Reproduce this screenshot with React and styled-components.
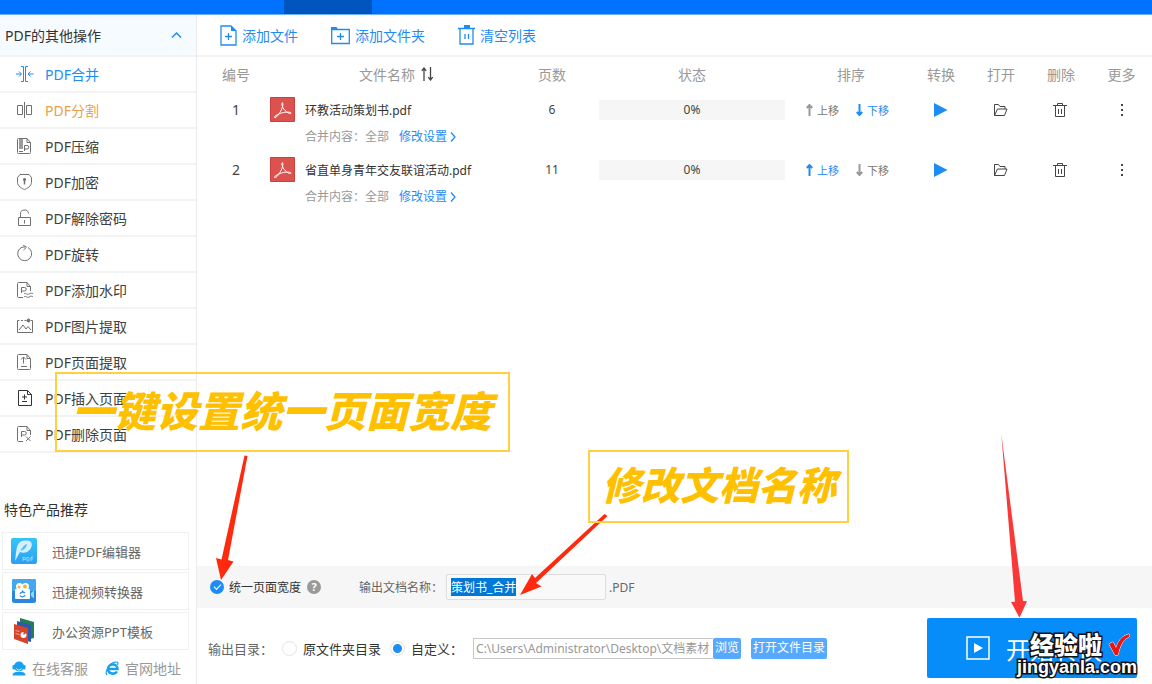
import React, { useEffect, useRef } from "react";
import styled, { createGlobalStyle } from "styled-components";

const BLUE = "#1e8cf5";
const LINE = "#f3f3f3";

const Global = createGlobalStyle`
  *, *::before, *::after { box-sizing: border-box; }
  body { margin: 0; background: #fff; }
  body, button, input { font-family: "Noto Sans", "Noto Sans CJK SC", sans-serif; }
  button { border: 0; padding: 0; background: none; cursor: pointer; }
  a { text-decoration: none; }
  svg { display: block; flex: none; }
`;

const Page = styled.div`
  position: relative;
  min-height: 100vh;
  display: flex;
  flex-direction: column;
`;
const TopBar = styled.header`
  display: flex;
  height: 15px;
  padding-left: 284px;
  background: #0072ff;
  border-bottom: 1px solid #6bb1ff;
`;
const ActiveTab = styled.div`
  width: 88px;
  background: #0055be;
`;
const Body = styled.div`
  flex: 1;
  display: grid;
  grid-template-columns: 197px minmax(0, 1fr);
`;

/* ---------- sidebar ---------- */
const Sidebar = styled.aside`
  display: flex;
  flex-direction: column;
  border-right: 1px solid #ebebeb;
`;
const GroupHeader = styled.button`
  display: flex;
  align-items: center;
  justify-content: space-between;
  height: 42px;
  padding: 0 14px 0 5px;
  background: #f6fbff;
  border-bottom: 2px solid ${LINE};
  font-size: 14px;
  color: #333;
`;
const Menu = styled.ul`
  list-style: none;
  margin: 0;
  padding: 0;
`;
const MenuLink = styled.a`
  display: flex;
  align-items: center;
  gap: 11px;
  height: 36px;
  padding-left: 16px;
  border-bottom: 2px solid ${LINE};
  font-size: 14px;
  line-height: 20px;
  color: ${(p) => p.$color || "#404040"};
  svg { color: ${(p) => p.$icon || "#707070"}; }
`;
const MenuText = styled.span`
  padding-top: 2px;
`;
const Products = styled.section`
  margin-top: auto;
  padding: 0 7px 0 2px;
`;
const ProductsTitle = styled.h2`
  margin: 0 0 12px 2px;
  font-size: 14px;
  line-height: 20px;
  font-weight: 400;
  color: #333;
`;
const ProductList = styled.div`
  display: grid;
  gap: 2px;
`;
const Product = styled.a`
  display: flex;
  align-items: center;
  gap: 15px;
  height: 38px;
  padding-left: 8px;
  border: 1px solid #f0f0f0;
  font-size: 13px;
  color: #666;
`;
const HelpLinks = styled.nav`
  display: flex;
  gap: 17px;
  height: 34px;
  padding: 2px 0 0 10px;
`;
const HelpLink = styled.a`
  display: flex;
  align-items: center;
  gap: 6px;
  font-size: 14px;
  color: #999;
`;

/* ---------- main ---------- */
const Main = styled.main`
  display: flex;
  flex-direction: column;
  min-width: 0;
`;
const Toolbar = styled.div`
  display: flex;
  align-items: center;
  gap: 33px;
  height: 42px;
  padding-left: 23px;
  border-bottom: 2px solid ${LINE};
`;
const ToolButton = styled.button`
  display: flex;
  align-items: center;
  gap: 5px;
  font-size: 14px;
  color: ${BLUE};
`;
const FileTable = styled.table`
  width: 100%;
  table-layout: fixed;
  border-collapse: collapse;
`;
const HeadCell = styled.th`
  height: 36px;
  padding: 0 0 2px ${(p) => p.$indent || 0}px;
  font-size: 14px;
  font-weight: 400;
  color: #999;
`;
const SortLabel = styled.span`
  display: inline-flex;
  align-items: center;
  gap: 6px;
`;
const Cell = styled.td`
  height: 60px;
  padding: 0 0 0 ${(p) => p.$indent || 0}px;
  vertical-align: top;
  text-align: center;
  font-size: ${(p) => p.$size || 12}px;
  color: #444;
`;
const CellLine = styled.div`
  display: flex;
  align-items: center;
  justify-content: center;
  height: 34px;
`;
const NumberLine = styled(CellLine)`
  height: 33px;
`;
const FileCell = styled.div`
  display: flex;
  gap: 10px;
  padding-top: 4px;
  text-align: left;
`;
const FileName = styled.div`
  font-size: 12px;
  line-height: 28px;
  color: #333;
`;
const FileMeta = styled.div`
  display: flex;
  align-items: center;
  gap: 10px;
  padding-top: 3px;
  font-size: 12px;
  line-height: 18px;
  color: #999;
`;
const MetaButton = styled.button`
  display: flex;
  align-items: center;
  gap: 3px;
  font-size: 12px;
  line-height: 18px;
  color: ${BLUE};
`;
const Progress = styled.div`
  height: 20px;
  margin: 0 6px;
  flex: 1;
  background: #f6f6f6;
  font-size: 12px;
  line-height: 20px;
`;
const MoveGroup = styled(CellLine)`
  height: 33px;
  gap: 17px;
  padding-right: 7px;
`;
const MoveButton = styled.button`
  display: flex;
  align-items: center;
  gap: 4px;
  font-size: 11px;
  color: ${(p) => (p.$on ? BLUE : "#777")};
  svg { color: ${(p) => (p.$on ? BLUE : "#999")}; }
`;
const IconButton = styled.button`
  color: ${(p) => p.$color || "#444"};
`;

/* ---------- output settings ---------- */
const Settings = styled.div`
  display: flex;
  align-items: center;
  height: 42px;
  margin-top: auto;
  padding-left: 13px;
  background: #f6f6f6;
  font-size: 12px;
  color: #666;
`;
const CheckLabel = styled.label`
  display: flex;
  align-items: center;
  gap: 5px;
  color: #333;
`;
const Check = styled.input`
  appearance: none;
  display: grid;
  place-items: center;
  width: 14px;
  height: 14px;
  margin: 0;
  border-radius: 50%;
  background: ${BLUE};
  &::after {
    content: "";
    width: 7px;
    height: 4px;
    margin-bottom: 2px;
    border: solid #fff;
    border-width: 0 0 1px 1px;
    transform: rotate(-45deg);
  }
`;
const HelpButton = styled.button`
  width: 14px;
  height: 14px;
  margin: 0 38px 0 6px;
  border-radius: 50%;
  background: #999;
  font-size: 11px;
  font-weight: 700;
  line-height: 14px;
  color: #fff;
`;
const NameInput = styled.input`
  width: 160px;
  height: 26px;
  margin: 0 3px 0 3px;
  padding: 0 4px;
  border: 1px solid #ddd;
  border-radius: 2px;
  outline: none;
  background: #f9f9f9;
  font-size: 12px;
  color: #333;
  &::selection { background: #0078d7; color: #fff; }
`;
const Output = styled.div`
  display: flex;
  align-items: center;
  height: 76px;
  padding: 4px 15px 0 11px;
  font-size: 13px;
  color: #666;
`;
const RadioLabel = styled.label`
  display: flex;
  align-items: center;
  gap: 6px;
  margin-left: ${(p) => p.$space}px;
  color: #333;
  white-space: nowrap;
`;
const Radio = styled.input`
  appearance: none;
  width: 15px;
  height: 15px;
  margin: 0;
  border: 1px solid #e4e4e4;
  border-radius: 50%;
  background: #fff;
  &:checked { background: radial-gradient(circle, ${BLUE} 0 4px, #fff 5px); }
`;
const PathInput = styled.input`
  width: 240px;
  height: 21px;
  margin-left: 10px;
  padding: 0 0 0 2px;
  border: 1px solid #c8c8c8;
  border-right: 0;
  border-radius: 0;
  font-size: 12px;
  color: #999;
`;
const SmallButton = styled.button`
  height: 21px;
  padding: 0 2px;
  margin-right: 10px;
  border-radius: 2px;
  background: #55aaff;
  font-size: 12px;
  line-height: 20px;
  color: #fff;
  white-space: nowrap;
`;
const StartButton = styled.button`
  display: flex;
  align-items: center;
  gap: 16px;
  width: 210px;
  height: 60px;
  margin-left: auto;
  padding-left: 39px;
  border-radius: 2px;
  background: #078dfa;
  font-size: 24px;
  color: #fff;
`;

/* ---------- notes drawn over the page ---------- */
const Note = styled.div`
  position: absolute;
  left: ${(p) => p.$x}px;
  top: ${(p) => p.$y}px;
  height: ${(p) => p.$h}px;
  padding: 0 ${(p) => p.$pr}px 0 ${(p) => p.$pl}px;
  border: 2px solid #ffd03f;
  font-size: ${(p) => p.$size}px;
  line-height: ${(p) => p.$h - 10}px;
  font-weight: 900;
  font-style: italic;
  font-family: "Noto Sans CJK SC", sans-serif;
  color: #ffc000;
  white-space: nowrap;
  pointer-events: none;
`;
const Arrows = styled.svg`
  position: absolute;
  left: 0;
  top: 0;
  pointer-events: none;
`;
const Stamp = styled.div`
  position: absolute;
  right: 15px;
  bottom: 7px;
  display: flex;
  flex-direction: column;
  align-items: flex-end;
  font-weight: 900;
  color: #fff;
  paint-order: stroke fill;
  -webkit-text-stroke: 3px #111;
  pointer-events: none;
`;
const StampTop = styled.div`
  display: flex;
  align-items: center;
  gap: 4px;
  padding-right: 5px;
  font-family: "Noto Sans CJK SC", sans-serif;
  font-size: 24px;
  line-height: 26px;
`;
const StampSite = styled.div`
  font-family: "Liberation Sans", sans-serif;
  font-size: 18px;
  line-height: 20px;
`;

const Svg = ({ w = 18, h = 18, children, ...rest }) => (
  <svg width={w} height={h} viewBox={`0 0 ${w} ${h}`} fill="none" stroke="currentColor" aria-hidden="true" {...rest}>
    {children}
  </svg>
);
const SHEET = "M11 1.5H2.5a1 1 0 0 0-1 1v13a1 1 0 0 0 1 1h11a1 1 0 0 0 1-1V5.500L11 1.500v4h3.500";
const OPEN_SHEET = "M7 16.500H2.500a1 1 0 0 1-1-1v-13a1 1 0 0 1 1-1H11v4h3.500L11 1.500M14.500 5.500V10";

const icons = {
  merge: <Svg><path d="M5 1.500h2.500v15H5M12 1.500H9.500v15H12M0 9h5M3 6.500 5.500 9 3 11.500M17.500 9H12M14.500 6.500 12 9l2.500 2.500" /></Svg>,
  split: <Svg><path d="M1.500 4.500h5v9h-5zM10.500 4.500h5v9h-5zM8.500 1v16" /></Svg>,
  compress: <Svg><path d={SHEET} /><path d="M3 2h4v10H3z" fill="currentColor" stroke="none" opacity=".7" /><path d="M8.500 14V8.500H11a1.500 1.500 0 0 1 0 3.500H8.500M3 14.500h4" /></Svg>,
  encrypt: <Svg><path d="M4 1.500h9l2.500 3v5C15.500 13 11 15.500 8.500 16.500 6 15.500 1.500 13 1.500 9.500v-5z" /><path d="M8.500 5.500v6" strokeWidth="1.500" /><circle cx="8.500" cy="6.500" r="1.500" fill="currentColor" stroke="none" /></Svg>,
  unlock: <Svg><path d="M2.500 8.500h12v8h-12zM4.500 8.500V5.500a4 4 0 0 1 8-1M8.500 11v3.500" /></Svg>,
  rotate: <Svg><path d="M12 2.500a7 7 0 1 1-6-.300L9 2" /><path d="M7 0l3.500 2.200L7.500 5" /></Svg>,
  watermark: <Svg><path d={OPEN_SHEET} /><path d="M5.500 12V6.500h3a1.500 1.500 0 0 1 0 3.500h-3M8 13c2-2 3 1.500 5 0s3-.5 4-.5M8 16c2-2 3 1.500 5 0s3-.5 4-.5" /></Svg>,
  picture: <Svg><path d="M3.500 3.500h-2v12h15v-12H15M3 13l4-5 3 4 2-2.500 3 3.500M5 3.500h2M8.500 3.500h2" /><circle cx="12.500" cy="3.500" r="1.500" fill="currentColor" /></Svg>,
  extract: <Svg><path d={SHEET} /><path d="M7.500 10.500V4M5 6.500 7.500 4 10 6.500M5 13.500h6" /></Svg>,
  insert: <Svg><path d="M11.500 1.500h-9v15h13v-11h-4v-4l4 4M8.500 5.500v5M6 8h5M6 12.500h5" /></Svg>,
  remove: <Svg><path d={OPEN_SHEET} /><path d="M5.500 12V6.500h3a1.500 1.500 0 0 1 0 3.500h-3M10 11.500l4.500 4.500M14.500 11.500 10 16" /></Svg>,
};

const MENU = [
  ["merge", "PDF合并", BLUE, BLUE],
  ["split", "PDF分割", "#e6a24a"],
  ["compress", "PDF压缩"],
  ["encrypt", "PDF加密"],
  ["unlock", "PDF解除密码"],
  ["rotate", "PDF旋转"],
  ["watermark", "PDF添加水印"],
  ["picture", "PDF图片提取"],
  ["extract", "PDF页面提取"],
  ["insert", "PDF插入页面", undefined, "#333"],
  ["remove", "PDF删除页面"],
];

const FILES = [
  { no: 1, name: "环教活动策划书.pdf", pages: 6, up: false, down: true },
  { no: 2, name: "省直单身青年交友联谊活动.pdf", pages: 11, up: true, down: false },
];

const EditorLogo = () => (
  <Svg w={26} h={26} stroke="none">
    <defs>
      <linearGradient id="ed" x1="0" y1="0" x2="0" y2="1"><stop stopColor="#35c5f7" /><stop offset="1" stopColor="#2ba0f3" /></linearGradient>
    </defs>
    <rect width="26" height="26" rx="2" fill="url(#ed)" />
    <path d="M4 23C5 17 5 8 8 5c3-3 9-3 12-1 2 3 0 8-4 10-2 1-5 1-7 0-2 3-3 6-5 9z" fill="#d5efff" />
    <path d="M9 13c2-2 3-6 7-7-1 4-3 6-7 7z" fill="#53bdf4" />
    <path d="M12 19.500h2.500M12 19v4M14.500 20v1.500H12M16 19v4M16 19.500h1.500l.5 1v1.500l-.5 1H16M20 23v-4h2.500M20 21h2" stroke="#a5dcff" fill="none" strokeWidth=".8" />
  </Svg>
);
const VideoLogo = () => (
  <Svg w={26} h={26} stroke="none">
    <rect x="1" y="1" width="24" height="24" rx="2" fill="#2c86dc" />
    <path d="M1 3a2 2 0 0 1 2-2h20a2 2 0 0 1 2 2v10H1z" fill="#43a8f0" />
    <circle cx="8.500" cy="8.500" r="3.500" fill="#fff" /><circle cx="14.500" cy="8.500" r="3.500" fill="#fff" />
    <circle cx="8" cy="9" r="1.500" fill="#ffb21c" /><circle cx="14" cy="8.500" r="2" fill="#ffb21c" />
    <rect x="4" y="11" width="15" height="10" rx="1" fill="#fff" />
    <path d="m20 15 3-2.500v8L20 18z" fill="#7ce1ff" />
    <path d="M14 15a3 3 0 0 0-5 1M9 17.500a2.800 2.800 0 0 0 5-.5M11 12.500l1.500 2" stroke="#358fe5" fill="none" strokeWidth="1.300" />
  </Svg>
);
const PptLogo = () => (
  <Svg w={26} h={26} stroke="none">
    <path d="m9 0 14 4v16l-4 1L9 6z" fill="#237f55" />
    <path d="m6 3 14 4v17l-4-1L6 9z" fill="#2f59a8" />
    <path d="m3 6 14 4v16L3 21z" fill="#d4452c" />
    <circle cx="12.500" cy="17" r="3" fill="#fff" /><path d="M12.500 17v-3.500l3.500 1z" fill="#d4452c" />
    <path d="m4.500 12 4 1v1l-4-1zM4.500 15l4 1v1l-4-1z" fill="#f0a596" />
  </Svg>
);
const AgentIcon = () => (
  <Svg w={14} h={15} stroke="none" fill="#16a0f0">
    <circle cx="7" cy="5.500" r="5" /><rect x="0.500" y="4" width="2.500" height="4.500" rx="1" /><rect x="11" y="4" width="2.500" height="4.500" rx="1" />
    <path d="M.5 14.500c0-2.500 2-3.500 4-3.500h5c2 0 4 1 4 3.500z" /><path d="M4.500 7.500c1 2 4 2 5 0" stroke="#fff" fill="none" />
  </Svg>
);
const BrowserIcon = () => (
  <Svg w={14} h={15} stroke="#16a0f0" strokeWidth="2.500">
    <path d="M3 8h9.500C12.500 2 3 2 3 8c0 5 7 6 9 2.500" />
    <path d="M2 14C-1 11 5 2 10 1.200c3-.7 3.500.8 2.500 2.800" strokeWidth="1.200" />
  </Svg>
);
const PdfIcon = () => (
  <Svg w={25} h={25} stroke="none">
    <rect width="25" height="25" rx="1" fill="#c9403c" /><rect x="1" y="1" width="23" height="23" fill="#dc524e" />
    <path d="M4.500 20.500C4 19 9 16.500 13.500 15.500c4-.8 8-.3 7.500.8-1 1.200-7.500-2-9-8.300-.4-3 1-3.200.9-.3C12.500 12.500 7 21.500 4.500 20.500z" fill="none" stroke="#fff" />
  </Svg>
);
const MoveArrow = ({ down }) => (
  <Svg w={7} h={12} strokeWidth="2">
    {down ? <path d="M3.500 0v11M.8 8l2.700 3 2.700-3" /> : <path d="M3.500 12V1M.8 4l2.700-3 2.700 3" />}
  </Svg>
);

export default function App() {
  const nameRef = useRef(null);
  useEffect(() => {
    nameRef.current.focus();
    nameRef.current.select();
  }, []);

  return (
    <Page>
      <Global />
      <TopBar><ActiveTab /></TopBar>
      <Body>
        <Sidebar>
          <GroupHeader>
            PDF的其他操作
            <Svg w={11} h={8} stroke={BLUE} strokeWidth="1.500"><path d="m1 6.500 4.500-4.500L10 6.500" /></Svg>
          </GroupHeader>
          <Menu>
            {MENU.map(([icon, label, color, iconColor]) => (
              <li key={icon}>
                <MenuLink href="#" $color={color} $icon={iconColor}>{icons[icon]}<MenuText>{label}</MenuText></MenuLink>
              </li>
            ))}
          </Menu>
          <Products>
            <ProductsTitle>特色产品推荐</ProductsTitle>
            <ProductList>
              <Product href="#"><EditorLogo />迅捷PDF编辑器</Product>
              <Product href="#"><VideoLogo />迅捷视频转换器</Product>
              <Product href="#"><PptLogo />办公资源PPT模板</Product>
            </ProductList>
            <HelpLinks>
              <HelpLink href="#"><AgentIcon />在线客服</HelpLink>
              <HelpLink href="#"><BrowserIcon />官网地址</HelpLink>
            </HelpLinks>
          </Products>
        </Sidebar>

        <Main>
          <Toolbar>
            <ToolButton>
              <Svg w={17} h={21} strokeWidth="1.300"><path d="M11 1H1v19h15V6M8.500 8v7M5 11.500h7" /><path d="M11 0v6h6z" fill="currentColor" stroke="none" /></Svg>
              添加文件
            </ToolButton>
            <ToolButton>
              <Svg w={19} h={19} strokeWidth="1.300"><path d="M.7 3.500h17.600v14H.7zM9.500 7v7M6 10.500h7" /><path d="M0 1h5.500l2 3H0z" fill="currentColor" stroke="none" /></Svg>
              添加文件夹
            </ToolButton>
            <ToolButton>
              <Svg w={17} h={20} strokeWidth="1.300"><path d="M0 3.500h17M2 3.500V19h13V3.500M7 9v5M10.500 9v5" /><path d="M6 0h6v3H6z" fill="currentColor" stroke="none" /></Svg>
              清空列表
            </ToolButton>
          </Toolbar>

          <FileTable>
            <colgroup>
              <col width="73" /><col width="241" /><col width="82" /><col /><col width="120" />
              <col width="60" /><col width="60" /><col width="60" /><col width="61" />
            </colgroup>
            <thead>
              <tr>
                <HeadCell $indent={5}>编号</HeadCell>
                <HeadCell $indent={12}>
                  <SortLabel>
                    文件名称
                    <Svg w={13} h={14} stroke="#444" strokeWidth="1.300"><path d="M3 14V1M.800 3.800 3 1l2.200 2.800M9.500 0v13M7.300 10.200 9.500 13l2.200-2.800" /></Svg>
                  </SortLabel>
                </HeadCell>
                <HeadCell>页数</HeadCell>
                <HeadCell>状态</HeadCell>
                <HeadCell>排序</HeadCell>
                <HeadCell>转换</HeadCell>
                <HeadCell>打开</HeadCell>
                <HeadCell>删除</HeadCell>
                <HeadCell>更多</HeadCell>
              </tr>
            </thead>
            <tbody>
              {FILES.map((f) => (
                <tr key={f.no}>
                  <Cell $indent={5} $size={14}><NumberLine>{f.no}</NumberLine></Cell>
                  <Cell>
                    <FileCell>
                      <PdfIcon />
                      <div>
                        <FileName>{f.name}</FileName>
                        <FileMeta>
                          <span>合并内容：全部</span>
                          <MetaButton>
                            修改设置
                            <Svg w={6} h={10} strokeWidth="1.300"><path d="m1 .5 4 4.500-4 4.500" /></Svg>
                          </MetaButton>
                        </FileMeta>
                      </div>
                    </FileCell>
                  </Cell>
                  <Cell><NumberLine>{f.pages}</NumberLine></Cell>
                  <Cell><CellLine><Progress role="progressbar" aria-valuenow={0}>0%</Progress></CellLine></Cell>
                  <Cell>
                    <MoveGroup>
                      <MoveButton $on={f.up}><MoveArrow />上移</MoveButton>
                      <MoveButton $on={f.down}><MoveArrow down />下移</MoveButton>
                    </MoveGroup>
                  </Cell>
                  <Cell>
                    <CellLine>
                      <IconButton $color={BLUE} aria-label="转换">
                        <Svg w={14} h={16} stroke="none"><path d="M0 1 13.500 8 0 15z" fill="currentColor" /></Svg>
                      </IconButton>
                    </CellLine>
                  </Cell>
                  <Cell>
                    <CellLine>
                      <IconButton aria-label="打开">
                        <Svg w={16} h={14}><path d="M1.500 12.500v-11h4l1.500 2h5v2.500M1.500 12.500h10l2.500-6.500H4.500z" /></Svg>
                      </IconButton>
                    </CellLine>
                  </Cell>
                  <Cell>
                    <CellLine>
                      <IconButton aria-label="删除">
                        <Svg w={16} h={16}><path d="M0 3.500h14M4.500 3V1.500h5V3M2.500 3.500v11h9v-11M5.500 7v5M8.500 7v5" /></Svg>
                      </IconButton>
                    </CellLine>
                  </Cell>
                  <Cell>
                    <CellLine>
                      <IconButton aria-label="更多">
                        <Svg w={4} h={14} stroke="none"><path d="M1 1h2v2H1zM1 6h2v2H1zM1 11h2v2H1z" fill="currentColor" /></Svg>
                      </IconButton>
                    </CellLine>
                  </Cell>
                </tr>
              ))}
            </tbody>
          </FileTable>

          <Settings>
            <CheckLabel><Check type="checkbox" defaultChecked />统一页面宽度</CheckLabel>
            <HelpButton>?</HelpButton>
            <label htmlFor="doc-name">输出文档名称：</label>
            <NameInput id="doc-name" ref={nameRef} defaultValue="策划书_合并" />
            .PDF
          </Settings>
          <Output>
            <span>输出目录：</span>
            <RadioLabel $space={9}><Radio type="radio" name="dir" />原文件夹目录</RadioLabel>
            <RadioLabel $space={9}><Radio type="radio" name="dir" defaultChecked />自定义：</RadioLabel>
            <PathInput aria-label="自定义目录" defaultValue="C:\Users\Administrator\Desktop\文档素材" />
            <SmallButton>浏览</SmallButton>
            <SmallButton>打开文件目录</SmallButton>
            <StartButton>
              <Svg w={24} h={24} strokeWidth="1.500"><path d="M1 1h22v22H1z" /><path d="m8 7 9 5-9 5z" fill="currentColor" stroke="none" /></Svg>
              开始转换
            </StartButton>
          </Output>
        </Main>
      </Body>

      <Arrows width="1152" height="684" viewBox="0 0 1152 684" aria-hidden="true">
        <path d="M244.500 455.500 247.500 456 228 560l5.500 1.500L221 580l-5-22 5.500 1.500z" fill="#ff2a0d" />
        <path d="M604.500 514 607.500 516 536 583l5.500 3.500L520 595l12-21 3 4z" fill="#ff2a0d" />
        <path d="M1001.300 434 1023 601l4 .3-7.500 16.500L1011 602l4-.3z" fill="#fb3838" />
      </Arrows>
      <Note $x={55} $y={372} $h={80} $pl={15} $pr={16} $size={42}>一键设置统一页面宽度</Note>
      <Note $x={588} $y={450} $h={73} $pl={12} $pr={11} $size={39}>修改文档名称</Note>
      <Stamp>
        <StampTop>
          经验啦
          <Svg w={26} h={26}>
            <path d="m3 13 4-2 3 6c2-6 5-12 13-14v3c-6 2-9 9-11 18H9z" fill="#f21212" stroke="#fff" />
          </Svg>
        </StampTop>
        <StampSite>jingyanla.com</StampSite>
      </Stamp>
    </Page>
  );
}
